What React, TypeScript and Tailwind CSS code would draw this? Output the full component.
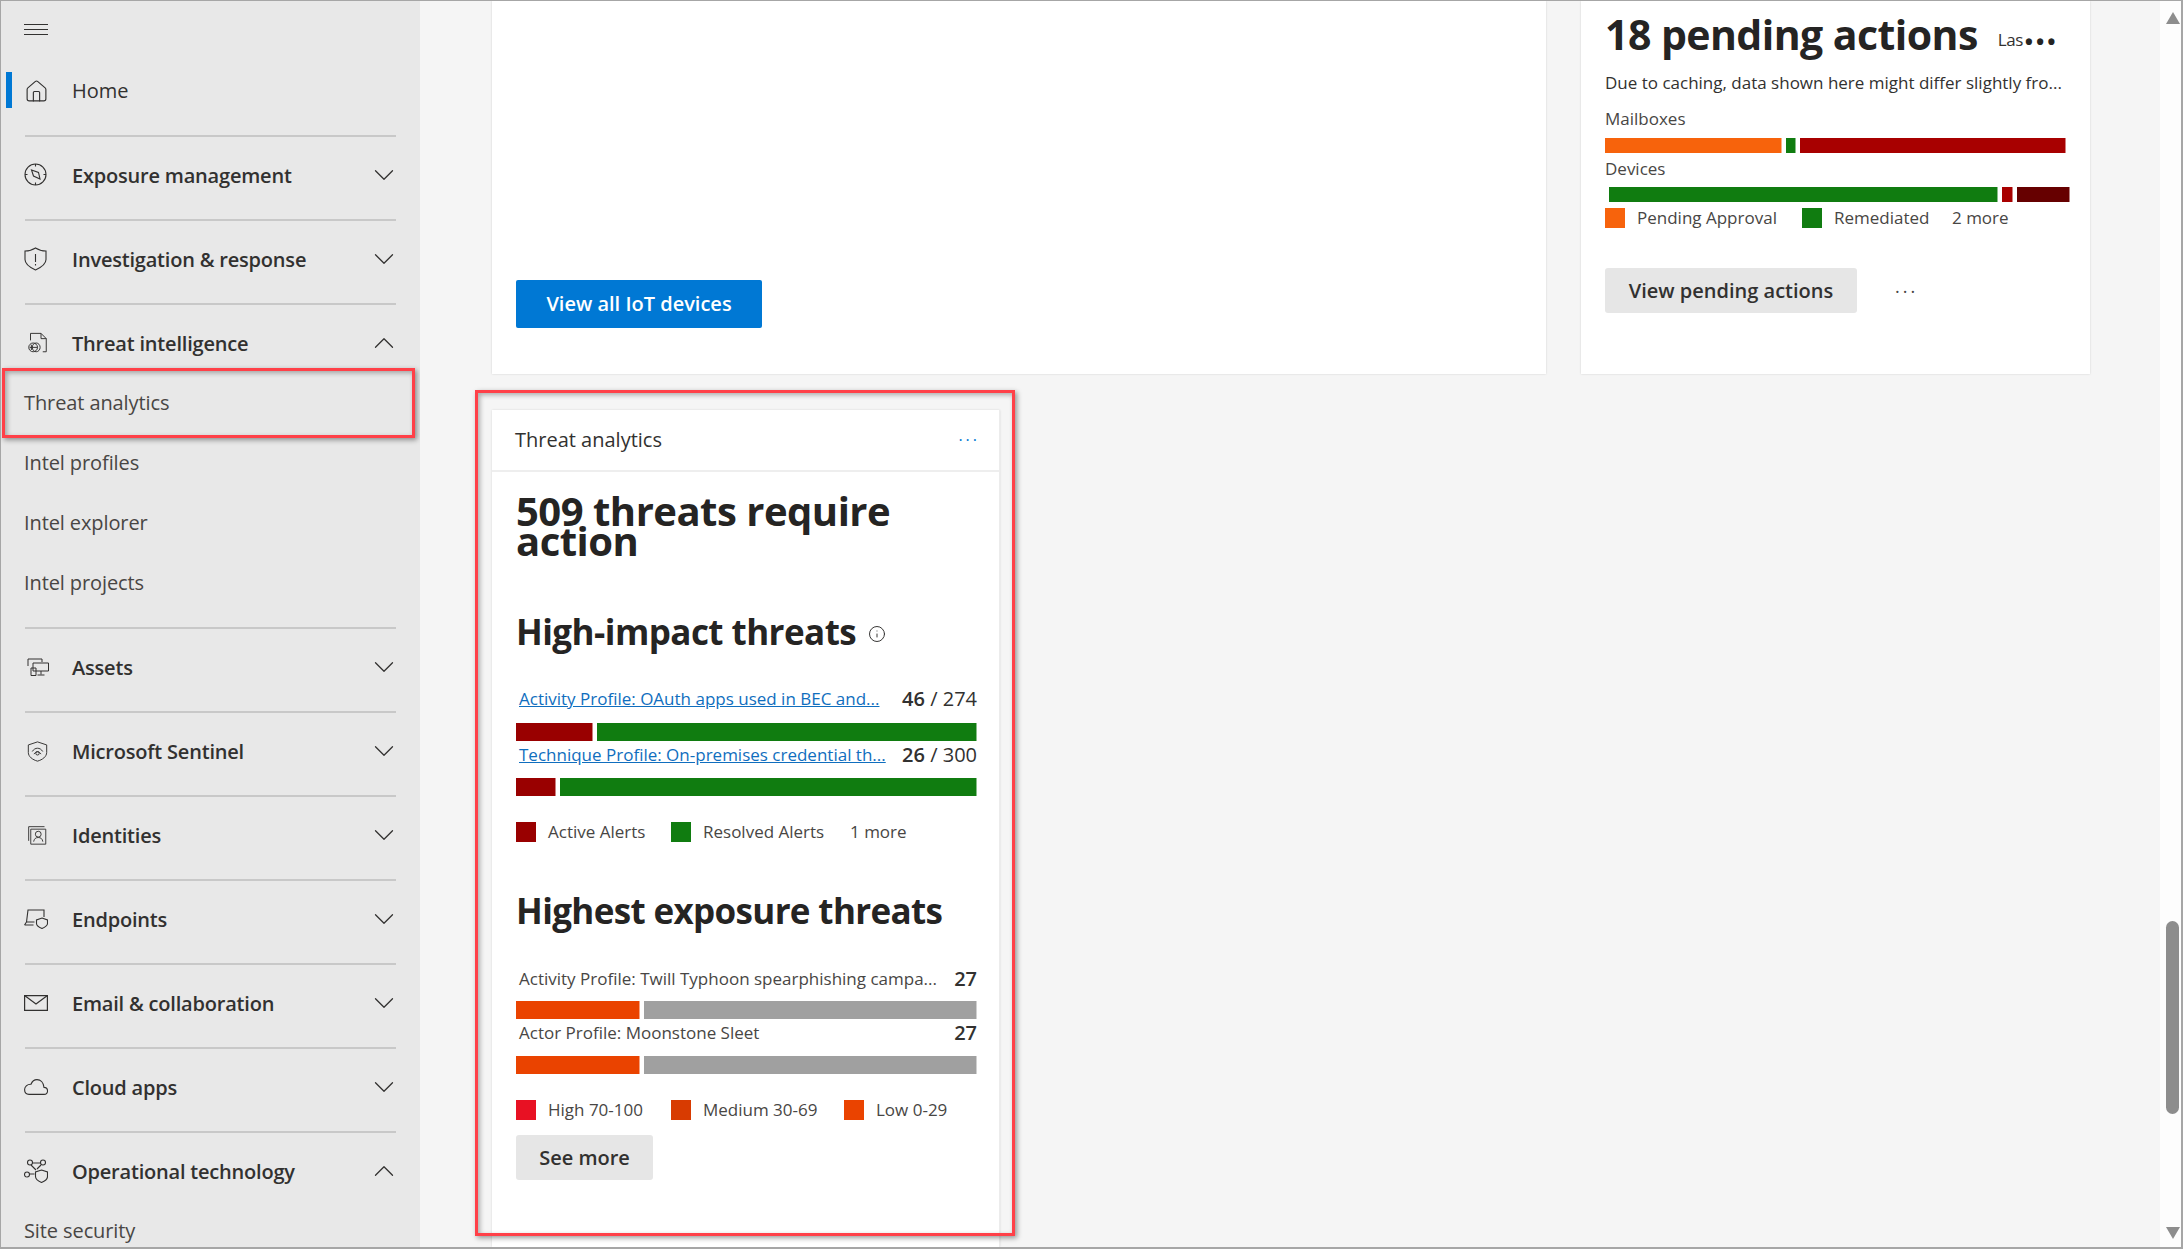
import { ChevronDown, ChevronUp, House, Info } from "lucide-react";
import type { ReactNode } from "react";

const font = "font-['Open_Sans','Noto_Sans',sans-serif]";

// nav icons, thin strokes like the Fluent set
const icon = (children: ReactNode, cls = "h-6 w-6") => (
  <svg viewBox="0 0 24 24" fill="none" stroke="#323130" strokeWidth="1.1" className={`shrink-0 ${cls}`}>
    {children}
  </svg>
);

const icons: Record<string, ReactNode> = {
  exposure: icon(
    <>
      <circle cx="11.5" cy="11.5" r="10.5" />
      <path d="M7.5 7l7 2.5 1.5 6.5-6.5-3z" />
      <path d="M11.5 1v2.5M11.5 19.5V22M1 11.5h2.5M19.5 11.5H22" />
    </>,
  ),
  shield: icon(
    <>
      <path d="M11.5 1c3 2 6.500 3 10.500 3v8.500c0 4.500-4 7.500-10.500 10.500C5 20 1 17 1 12.500V4c4 0 7.500-1 10.500-3z" />
      <path d="M11.500 7v8M11.500 17v1.500" />
    </>,
  ),
  intel: icon(
    <>
      <path d="M4 9V1h12l6 6v15h-4M16 1v6h6" />
      <circle cx="7" cy="17" r="5" />
      <ellipse cx="10.500" cy="17" rx="4.500" ry="5" />
      <path d="M5 14v6M3 17h9" />
    </>,
    "ml-[3px] h-[22px] w-[21px]",
  ),
  assets: (
    <svg viewBox="0 0 22 18" fill="none" stroke="#323130" strokeWidth="1" className="ml-[3px] h-[18px] w-[22px] shrink-0">
      <path d="M1 8V1h14v3" />
      <path d="M6 5h15.500v8H6zM14 13v3.500M10.500 17h7" />
      <path d="M4 10h5v7.500H4z" />
    </svg>
  ),
  sentinel: icon(
    <>
      <path d="M12 1l10.500 3.500v8.500c0 5-5 8.500-10.500 10-5.500-1.500-10.500-5-10.500-10V4.500z" />
      <path d="M6 12c3-5 9-5 12 0M8 15c2-3.500 6-3.500 8 0" />
      <circle cx="12" cy="14" r="2" />
    </>,
    "ml-[3px] h-[21px] w-[21px]",
  ),
  identities: icon(
    <>
      <path d="M2 19V2h19" />
      <path d="M4.500 5h18v18h-18z" />
      <circle cx="13.500" cy="11" r="3.500" />
      <path d="M8 20c.5-3.500 2.500-5 5.500-5s5 1.500 5.500 5" />
    </>,
    "ml-[3px] h-[20px] w-[20px]",
  ),
  endpoints: (
    <svg viewBox="0 0 24 20" fill="none" stroke="#323130" strokeWidth="1.1" className="h-5 w-6 shrink-0">
      <path d="M2.500 13L4 1h16v7M.5 16l2-3h8M.5 16h9" />
      <path d="M18 9l5.500 2v3.500c0 2-2 3.500-5.500 5-3.500-1.500-5.500-3-5.500-5V11z" />
    </svg>
  ),
  mail: (
    <svg width="24" height="16" viewBox="0 0 24 16" fill="none" stroke="#323130" strokeWidth="1.2" className="shrink-0">
      <path d="M.6.6h22.800v14.800H.6z" />
      <path d="M.6.6L12 9 23.400.6" />
    </svg>
  ),
  cloud: (
    <svg width="24" height="16" viewBox="0 0 24 16" fill="none" stroke="#323130" strokeWidth="1.1" className="shrink-0">
      <path d="M5 15.400h15c5 0 4.500-7 0-7C19.500 3.500 16.500.6 13 .6c-3 0-5 2-6 4.600C3 5 .6 8 .6 10.500.6 13.500 2.500 15.400 5 15.400z" />
    </svg>
  ),
  ot: icon(
    <>
      <circle cx="6" cy="3.500" r="2.500" />
      <circle cx="19" cy="3.500" r="2.500" />
      <circle cx="3" cy="15.500" r="2.500" />
      <path d="M8.500 4h8M7 6l5 5M17 6l-4 4M5.500 15h5" />
      <path d="M17.500 11l6 2v4.500c0 2.500-2.500 4.500-6 6-3.500-1.500-6-3.500-6-6V13z" />
    </>,
  ),
};

const Divider = () => <div className="mx-6 h-[2px] bg-[#c8c8c8]" />;

const Header = ({ name, ic, open }: { name: string; ic: ReactNode; open?: boolean }) => (
  <div className="flex h-[78px] items-center pl-[23px] pr-[19px] text-[20px] font-semibold tracking-[-0.2px] text-[#323130]">
    <span className="mb-[2px] flex w-[48px] shrink-0 items-center">{ic}</span>
    <span className="flex-1">{name}</span>
    <span className="mb-[2px]">
      {open ? (
        <ChevronUp size={34} strokeWidth={0.9} color="#323130" />
      ) : (
        <ChevronDown size={34} strokeWidth={0.9} color="#323130" />
      )}
    </span>
  </div>
);

const Sub = ({ name, marked }: { name: string; marked?: boolean }) => (
  <div className="relative flex h-[60px] items-center pl-[23px] text-[20px] tracking-[-0.1px] text-[#484644]">
    {name}
    {marked && (
      <div className="absolute left-px top-[-5px] h-[70px] w-[413px] border-[3px] border-[#ff4048] shadow-[2px_2px_5px_rgba(0,0,0,0.4),inset_2px_2px_5px_rgba(0,0,0,0.3)]" />
    )}
  </div>
);

const Group = ({ name, ic, children }: { name: string; ic: ReactNode; children?: ReactNode }) => (
  <>
    <Divider />
    <Header name={name} ic={ic} open={!!children} />
    {children ? <div className="mt-[-10px] mb-[14px]">{children}</div> : <div className="h-1" />}
  </>
);

const Sidebar = () => (
  <aside className="h-full w-[419px] shrink-0 overflow-hidden bg-[#e8e8e8]">
    <div className="ml-[23px] flex h-[51px] w-6 flex-col gap-[4px] pt-[23px]">
      <div className="h-px bg-[#323130]" />
      <div className="h-px bg-[#323130]" />
      <div className="h-px bg-[#323130]" />
    </div>
    <div className="relative flex h-[78px] items-center pl-[23px] text-[20px] text-[#323130]">
      <div className="absolute left-[5px] top-5 h-9 w-1.5 bg-[#0078d4]" />
      <span className="flex w-[48px] items-center">
        <House size={25} strokeWidth={1.1} color="#323130" />
      </span>
      Home
    </div>
    <div className="h-[5px]" />
    <Group name="Exposure management" ic={icons.exposure} />
    <Group name="Investigation &amp; response" ic={icons.shield} />
    <Group name="Threat intelligence" ic={icons.intel}>
      <Sub name="Threat analytics" marked />
      <Sub name="Intel profiles" />
      <Sub name="Intel explorer" />
      <Sub name="Intel projects" />
    </Group>
    <Group name="Assets" ic={icons.assets} />
    <Group name="Microsoft Sentinel" ic={icons.sentinel} />
    <Group name="Identities" ic={icons.identities} />
    <Group name="Endpoints" ic={icons.endpoints} />
    <Group name="Email &amp; collaboration" ic={icons.mail} />
    <Group name="Cloud apps" ic={icons.cloud} />
    <Group name="Operational technology" ic={icons.ot}>
      <Sub name="Site security" />
    </Group>
  </aside>
);

const Seg = ({ cls }: { cls: string }) => <div className={`h-full border-r border-white/50 ${cls}`} />;

const Legend = ({ items }: { items: { label: string; color: string; text: string }[] }) => (
  <div className="flex h-5 items-center text-[17px] text-[#484644]">
    {items.map((it) => (
      <div key={it.label} className={`flex items-center ${it.text}`}>
        <div className={`mr-3 h-5 w-5 shrink-0 ${it.color}`} />
        {it.label}
      </div>
    ))}
  </div>
);

const ThreatRow = ({ label, value, link }: { label: string; value: ReactNode; link?: boolean }) => (
  <div className="flex h-[30px] items-center justify-between pl-[3px] text-[17px]">
    <span className={link ? "text-[#106ebe] underline" : "text-[#484644]"}>{label}</span>
    <span className="text-[20px] text-[#323130]">{value}</span>
  </div>
);

const ThreatCard = () => (
  <div className="relative mt-[36px] flex flex-1">
    <div className="flex w-[508px] flex-col border-r border-[#ececec] bg-white shadow-[0_0_2px_rgba(0,0,0,0.12)]">
      <div className="flex h-[62px] shrink-0 items-center justify-between border-b-2 border-[#eeeeee] pl-[23px] pr-[19px] text-[20px] text-[#323130]">
        <span className="font-medium">Threat analytics</span>
        <span className="text-[16px] font-normal leading-none tracking-[3px] text-[#0078d4]">···</span>
      </div>
      <div className="flex flex-col pl-[24px] pr-[22px]">
        <h2 className="mt-[24px] w-[460px] text-[40px] font-bold leading-[30px] tracking-[-0.5px] text-[#252423]">
          509 threats require action
        </h2>
        <div className="mt-[53px] flex h-[46px] items-center text-[35px] font-bold tracking-[-0.55px] text-[#252423]">
          High-impact threats
          <Info size={18} strokeWidth={1.3} color="#323130" className="ml-[12px] mt-1" />
        </div>
        <div className="mt-[29px]">
          <ThreatRow
            link
            label="Activity Profile: OAuth apps used in BEC and..."
            value={
              <>
                <span className="font-semibold">46</span> / 274
              </>
            }
          />
          <div className="mt-[9px] flex h-[18px] gap-[4px]">
            <Seg cls="w-[77px] bg-[#990000]" />
            <Seg cls="flex-1 bg-[#107c10]" />
          </div>
          <div className="mt-[-1px]">
            <ThreatRow
              link
              label="Technique Profile: On-premises credential th..."
              value={
                <>
                  <span className="font-semibold">26</span> / 300
                </>
              }
            />
          </div>
          <div className="mt-[8px] flex h-[18px] gap-[4px]">
            <Seg cls="w-[40px] bg-[#990000]" />
            <Seg cls="flex-1 bg-[#107c10]" />
          </div>
        </div>
        <div className="relative mt-[26px]">
          <Legend
            items={[
              { label: "Active Alerts", color: "bg-[#990000]", text: "w-[155px]" },
              { label: "Resolved Alerts", color: "bg-[#107c10]", text: "w-[179px]" },
            ]}
          />
          <span className="absolute left-[334px] top-0 text-[17px] leading-5 text-[#484644]">1 more</span>
        </div>
        <div className="mt-[46px] flex h-[46px] items-center text-[35px] font-bold tracking-[-0.65px] text-[#252423]">
          Highest exposure threats
        </div>
        <div className="mt-[30px]">
          <ThreatRow label="Activity Profile: Twill Typhoon spearphishing campa..." value={<span className="font-semibold">27</span>} />
          <div className="mt-[7px] flex h-[18px] gap-[4px]">
            <Seg cls="w-[124px] bg-[#ea4300]" />
            <Seg cls="flex-1 bg-[#a0a0a0]" />
          </div>
          <div className="mt-[-1px]">
            <ThreatRow label="Actor Profile: Moonstone Sleet" value={<span className="font-semibold">27</span>} />
          </div>
          <div className="mt-[8px] flex h-[18px] gap-[4px]">
            <Seg cls="w-[124px] bg-[#ea4300]" />
            <Seg cls="flex-1 bg-[#a0a0a0]" />
          </div>
        </div>
        <div className="mt-[26px]">
          <Legend
            items={[
              { label: "High 70-100", color: "bg-[#e81123]", text: "w-[155px]" },
              { label: "Medium 30-69", color: "bg-[#d83b01]", text: "w-[173px]" },
              { label: "Low 0-29", color: "bg-[#ea4300]", text: "" },
            ]}
          />
        </div>
        <button className="mt-[15px] flex h-[45px] w-[137px] items-center justify-center rounded-[3px] bg-[#e6e6e6] text-[20px] font-semibold text-[#323130]">
          See more
        </button>
      </div>
    </div>
    <div className="absolute left-[-17px] top-[-20px] h-[846px] w-[540px] border-[3px] border-[#ff4048] shadow-[2px_2px_5px_rgba(0,0,0,0.4),inset_2px_2px_5px_rgba(0,0,0,0.3)]" />
  </div>
);

const IotCard = () => (
  <div className="flex h-[373px] w-[1054px] flex-col justify-end bg-white pb-[46px] pl-[24px] shadow-[0_0_2px_rgba(0,0,0,0.15)]">
    <button className="h-[48px] w-[246px] rounded-[2px] bg-[#0078d4] text-[20px] font-semibold text-white">
      View all IoT devices
    </button>
  </div>
);

const PendingCard = () => (
  <div className="flex h-[373px] w-[509px] flex-col bg-white pl-[24px] pr-[19px] shadow-[0_0_2px_rgba(0,0,0,0.15)]">
    <div className="mt-[10px] flex h-[48px] items-center whitespace-nowrap">
      <span className="text-[41px] font-bold tracking-[-0.55px] text-[#252423]">18 pending actions</span>
      <span className="ml-[20px] mt-[10px] text-[17px] tracking-[-0.5px] text-[#323130]">Las</span>
      <span className="ml-[2px] mt-[12px] text-[22px] font-bold leading-none tracking-[3px] text-[#252423]">•••</span>
    </div>
    <div className="h-[48px] text-[17px] leading-[48px] text-[#323130]">Due to caching, data shown here might differ slightly fro...</div>
    <div className="h-6 text-[17px] leading-6 text-[#484644]">Mailboxes</div>
    <div className="mt-[7px] flex h-[15px] w-[461px] gap-[4px]">
      <Seg cls="w-[177px] bg-[#f7630c]" />
      <Seg cls="w-[10px] bg-[#107c10]" />
      <Seg cls="flex-1 bg-[#a80000]" />
    </div>
    <div className="mt-[4px] h-6 text-[17px] leading-6 text-[#484644]">Devices</div>
    <div className="ml-[4px] mt-[6px] flex h-[15px] w-[461px] gap-[4px]">
      <Seg cls="w-[389px] bg-[#107c10]" />
      <Seg cls="w-[11px] bg-[#a80000]" />
      <Seg cls="flex-1 bg-[#660000]" />
    </div>
    <div className="relative mt-[6px]">
      <Legend
        items={[
          { label: "Pending Approval", color: "bg-[#f7630c]", text: "w-[197px]" },
          { label: "Remediated", color: "bg-[#107c10]", text: "w-[150px]" },
        ]}
      />
      <span className="absolute left-[347px] top-0 text-[17px] leading-5 text-[#484644]">2 more</span>
    </div>
    <div className="mt-[40px] flex items-center">
      <button className="h-[45px] w-[252px] rounded-[3px] bg-[#e6e6e6] text-[20px] font-semibold text-[#323130]">
        View pending actions
      </button>
      <span className="ml-[38px] text-[18px] font-normal leading-none tracking-[3px] text-[#484644]">···</span>
    </div>
  </div>
);

const Scrollbar = () => (
  <div className="flex h-full w-[21px] shrink-0 flex-col items-center bg-[#fdfdfd] pl-[4px]">
    <svg width="14" height="12" viewBox="0 0 14 12" className="mt-[11px] shrink-0" fill="#8d8d8d">
      <path d="M7 0l7 12H0z" />
    </svg>
    <div className="mt-[897px] h-[193px] w-[13px] shrink-0 rounded-full bg-[#8d8d8d]" />
    <svg width="14" height="12" viewBox="0 0 14 12" className="mt-[113px] shrink-0" fill="#8d8d8d">
      <path d="M7 12L14 0H0z" />
    </svg>
  </div>
);

export default function App() {
  return (
    <div className={`${font} flex h-[1249px] w-[2183px] overflow-hidden border-b-2 border-l border-r-2 border-t border-[#a6a6a6]`}>
      <Sidebar />
      <main className="flex h-full flex-1 flex-col overflow-hidden bg-[#f5f5f5] pl-[72px]">
        <div className="flex shrink-0 gap-[35px]">
          <IotCard />
          <PendingCard />
        </div>
        <ThreatCard />
      </main>
      <Scrollbar />
    </div>
  );
}
